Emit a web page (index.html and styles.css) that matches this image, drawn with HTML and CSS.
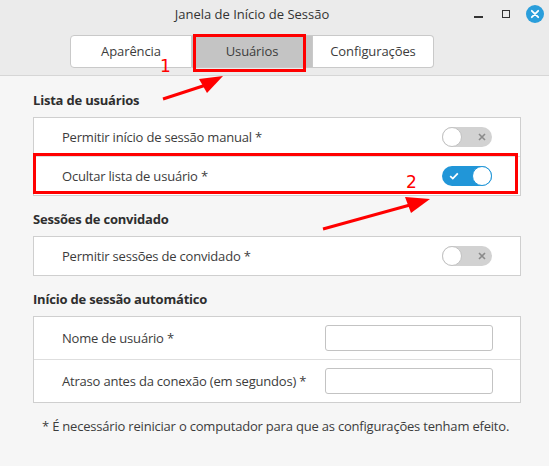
FILE: index.html
```html
<!DOCTYPE html>
<html lang="pt-BR">
<head>
    <meta charset="UTF-8">
    <title>Janela de Início de Sessão</title>
    <link rel="stylesheet" href="styles.css">
</head>
<body>
    <div class="window">
        <div class="header">
            <div class="titlebar">
                <div class="title">Janela de Início de Sessão</div>
                <div class="controls">
                    <span class="btn-min"></span>
                    <span class="btn-max"></span>
                    <span class="btn-close">
                        <svg width="18" height="18" viewBox="0 0 18 18">
                            <circle cx="9" cy="9" r="9" fill="#2a9edb"/>
                            <path d="M5.8 5.8 L12.2 12.2 M12.2 5.8 L5.8 12.2" stroke="#fff" stroke-width="1.8" stroke-linecap="round"/>
                        </svg>
                    </span>
                </div>
            </div>
            <div class="tabs">
                <div class="tab first">Aparência</div>
                <div class="tab active">Usuários</div>
                <div class="tab last">Configurações</div>
            </div>
        </div>

        <div class="content">
            <h3 class="section-title">Lista de usuários</h3>
            <div class="group">
                <div class="row">
                    <span>Permitir início de sessão manual *</span>
                    <span class="switch">
                        <span class="knob"></span>
                        <svg class="mark" width="8" height="8" viewBox="0 0 8 8"><path d="M1 1 L7 7 M7 1 L1 7" stroke="#8a8a8a" stroke-width="1.6"/></svg>
                    </span>
                </div>
                <div class="row">
                    <span>Ocultar lista de usuário *</span>
                    <span class="switch on">
                        <svg class="mark" width="10" height="8" viewBox="0 0 10 8"><path d="M1.2 4.2 L3.8 6.6 L8.8 1.4" stroke="#fff" stroke-width="1.8" fill="none"/></svg>
                        <span class="knob"></span>
                    </span>
                </div>
            </div>

            <h3 class="section-title">Sessões de convidado</h3>
            <div class="group">
                <div class="row">
                    <span>Permitir sessões de convidado *</span>
                    <span class="switch">
                        <span class="knob"></span>
                        <svg class="mark" width="8" height="8" viewBox="0 0 8 8"><path d="M1 1 L7 7 M7 1 L1 7" stroke="#8a8a8a" stroke-width="1.6"/></svg>
                    </span>
                </div>
            </div>

            <h3 class="section-title">Início de sessão automático</h3>
            <div class="group">
                <div class="row tall">
                    <span>Nome de usuário *</span>
                    <input type="text" class="field">
                </div>
                <div class="row tall">
                    <span>Atraso antes da conexão (em segundos) *</span>
                    <input type="text" class="field">
                </div>
            </div>

            <p class="note">* É necessário reiniciar o computador para que as configurações tenham efeito.</p>
        </div>

        <!-- annotations drawn over the screenshot -->
        <div class="mark-box box-tab"></div>
        <div class="mark-box box-row"></div>
        <span class="mark-num num-1">1</span>
        <span class="mark-num num-2">2</span>
        <svg class="arrows" width="549" height="466" viewBox="0 0 549 466">
            <line x1="163" y1="99" x2="206" y2="85" stroke="#f00" stroke-width="3"/>
            <polygon points="223,76 199,79 207,93" fill="#f00"/>
            <line x1="323" y1="229" x2="410" y2="205" stroke="#f00" stroke-width="3"/>
            <polygon points="430,199 405,197 411,213" fill="#f00"/>
        </svg>
    </div>
</body>
</html>
```

FILE: styles.css
```css
body {
    margin: 0;
    padding: 0;
    font-family: "Open Sans", "DejaVu Sans", sans-serif;
    font-size: 13px;
    color: #3c3c3c;
    background-color: #f6f6f6;
}
.window {
    position: relative;
    width: 549px;
    height: 466px;
    overflow: hidden;
    background-color: #f6f6f6;
}
.header {
    height: 75px;
    background-color: #ebebeb;
    border-bottom: 1px solid #d6d6d6;
}
.titlebar {
    display: flex;
    align-items: center;
    height: 27px;
}
.title {
    flex: 1;
    text-align: center;
    padding-left: 38px;
    color: #333;
}
.controls {
    display: flex;
    align-items: center;
    width: 83px;
    height: 27px;
}
.btn-min {
    width: 9px;
    height: 2px;
    background-color: #333;
    margin: 6px 0 0 8px;
}
.btn-max {
    width: 6px;
    height: 6px;
    border: 1.5px solid #333;
    margin-left: 19px;
}
.btn-close {
    display: flex;
    margin-left: 16px;
}
.tabs {
    display: flex;
    padding: 8px 0 0 70px;
}
.tab {
    width: 120px;
    height: 31px;
    line-height: 31px;
    text-align: center;
    background-color: #fff;
    border: 1px solid #c9c9c9;
    border-left: none;
    letter-spacing: -0.1px;
}
.tab.first {
    border-left: 1px solid #c9c9c9;
    border-radius: 4px 0 0 4px;
}
.tab.last {
    border-radius: 0 4px 4px 0;
}
.tab.active {
    background-color: #c4c4c4;
}
.content {
    padding: 14px 28px 0 33px;
    letter-spacing: -0.2px;
}
.section-title {
    margin: 13px 0 7px;
    font-size: 13px;
    font-weight: bold;
    line-height: 20px;
    color: #2e2e2e;
}
.section-title:first-child {
    margin-top: 0;
}
.group {
    background-color: #fff;
    border: 1px solid #cfcfcf;
}
.row {
    display: flex;
    align-items: center;
    justify-content: space-between;
    height: 38px;
    padding: 0 28px;
}
.row + .row {
    border-top: 1px solid #dedede;
}
.row.tall {
    height: 42px;
    padding-right: 27px;
}
.switch {
    position: relative;
    display: flex;
    align-items: center;
    justify-content: space-between;
    width: 50px;
    height: 20px;
    box-sizing: border-box;
    border-radius: 10px;
    background-color: #d2d2d2;
    padding-right: 6px;
}
.switch .knob {
    width: 20px;
    height: 20px;
    box-sizing: border-box;
    border-radius: 50%;
    background-color: #fff;
    border: 1px solid #c2c2c2;
}
.switch.on {
    background-color: #2196d8;
    padding: 0 0 0 7px;
}
.switch.on .knob {
    border-color: #2196d8;
}
.field {
    width: 168px;
    height: 26px;
    box-sizing: border-box;
    border: 1px solid #c3c3c3;
    border-radius: 3px;
    background-color: #fff;
}
.note {
    margin: 13px 0 0 9px;
    line-height: 20px;
    white-space: nowrap;
}
.mark-box {
    position: absolute;
    border: 3px solid #f00;
    box-sizing: border-box;
}
.box-tab {
    left: 193px;
    top: 34px;
    width: 113px;
    height: 38px;
}
.box-row {
    left: 33px;
    top: 153px;
    width: 485px;
    height: 41px;
}
.mark-num {
    position: absolute;
    color: #f00;
    font-family: "DejaVu Sans", sans-serif;
    font-size: 17px;
    line-height: 17px;
}
.num-1 {
    left: 160px;
    top: 58px;
}
.num-2 {
    left: 406px;
    top: 174px;
}
.arrows {
    position: absolute;
    left: 0;
    top: 0;
}
```
